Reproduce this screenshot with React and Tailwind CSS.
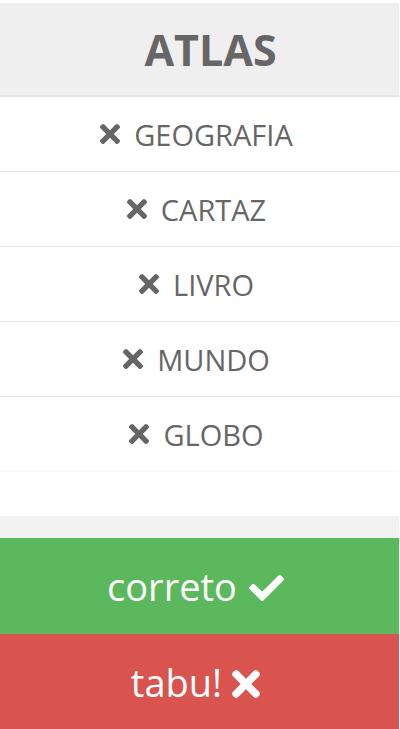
import React from 'react';

const words = ['GEOGRAFIA', 'CARTAZ', 'LIVRO', 'MUNDO', 'GLOBO'];

const TimesIcon = ({ className }) => (
  <svg viewBox="0 80 352 352" className={className} fill="currentColor">
    <path d="M242.72 256l100.07-100.07c12.28-12.28 12.28-32.19 0-44.48l-22.24-22.24c-12.28-12.28-32.19-12.28-44.48 0L176 189.28 75.93 89.21c-12.28-12.28-32.19-12.28-44.48 0L9.21 111.45c-12.28 12.28-12.28 32.19 0 44.48L109.28 256 9.21 356.07c-12.28 12.28-12.28 32.19 0 44.48l22.24 22.24c12.28 12.28 32.2 12.28 44.48 0L176 322.72l100.07 100.07c12.28 12.28 32.2 12.28 44.48 0l22.24-22.24c12.28-12.28 12.28-32.19 0-44.48L242.72 256z" />
  </svg>
);

const CheckIcon = ({ className }) => (
  <svg viewBox="0 65 512 382" className={className} fill="currentColor">
    <path d="M173.898 439.404l-166.4-166.4c-9.997-9.997-9.997-26.206 0-36.204l36.203-36.204c9.997-9.998 26.207-9.998 36.204 0L192 312.69 432.095 72.596c9.997-9.997 26.207-9.997 36.204 0l36.203 36.204c9.997 9.997 9.997 26.206 0 36.204l-294.4 294.401c-9.998 9.997-26.207 9.997-36.204-.001z" />
  </svg>
);

const App = () => {
  return (
    <div className="w-[400px] h-[729px] overflow-hidden bg-white pt-[3px] font-['Open_Sans',sans-serif]">
      <div className="w-[399px]">
        <div className="h-[94px] bg-[#efefef] border-b-2 border-[#e3e3e3] flex items-center justify-center pl-[22px]">
          <h1 className="text-[43px] font-bold text-[#666] leading-none">ATLAS</h1>
        </div>

        {words.map((word, i) => (
          <div
            key={word}
            className={`h-[75px] flex items-center justify-center gap-[14px] pr-[6px] border-b ${
              i === words.length - 1 ? 'border-[#f8f8f8]' : 'border-[#e5e5e5]'
            } text-[#666]`}
          >
            <TimesIcon className="w-[20px] h-[20px]" />
            <span className="text-[29px] leading-none">{word}</span>
          </div>
        ))}

        <div className="h-[44px] bg-white" />
        <div className="h-[22px] bg-[#f2f2f2]" />

        <button className="w-full h-[96px] bg-[#5cb85c] text-white flex items-center justify-center gap-[12px] pr-[8px]">
          <span className="text-[38px] leading-none">correto</span>
          <CheckIcon className="w-[35px] h-[26px] mt-[4px]" />
        </button>
        <button className="w-full h-[96px] bg-[#d9534f] text-white flex items-center justify-center gap-[10px] pr-[8px]">
          <span className="text-[38px] leading-none">tabu!</span>
          <TimesIcon className="w-[28px] h-[28px] mt-[4px]" />
        </button>
      </div>
    </div>
  );
};

export default App;
